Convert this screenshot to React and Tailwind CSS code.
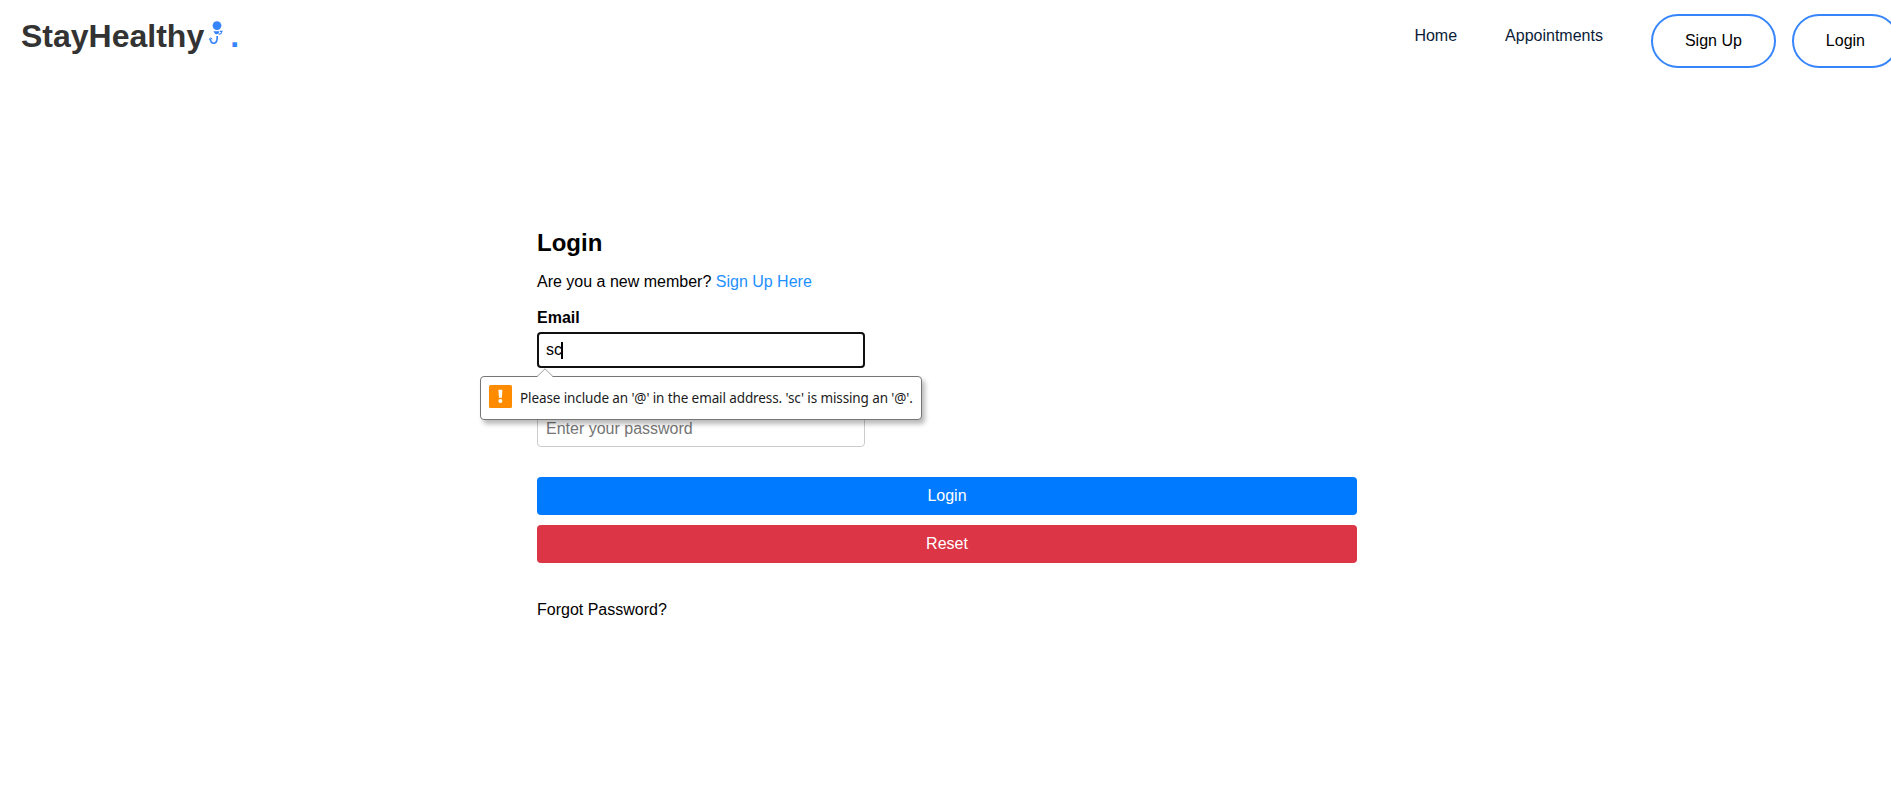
function DoctorIcon() {
  return (
    <svg className="ml-1 mt-[17px] h-7 w-5 shrink-0" viewBox="0 0 20 28" fill="none" aria-hidden="true">
      <circle cx="9" cy="7.6" r="4.4" fill="#3685fb" />
      <path d="M5.4 13.2H11.6L10.6 15.6Q8.6 17 6.8 15.4Z" fill="#3685fb" />
      <path d="M12 13.4H14L12.9 15.6L10.8 16.6" stroke="#3685fb" strokeWidth="1.1" />
      <path d="M2.2 20.8C2.8 24.2 4.6 25.5 6.3 25.2C9 24.6 9.4 22 9.2 18" stroke="#3685fb" strokeWidth="1.7" />
      <path d="M1.3 21.6L2.4 19.8L4.4 21" stroke="#3685fb" strokeWidth="1" />
    </svg>
  );
}

function NavButton({ children }) {
  return (
    <button className="h-[54px] shrink-0 rounded-full border-2 border-[#3685fb] px-8 text-base leading-[50px] text-black">
      {children}
    </button>
  );
}

function ValidationBubble() {
  return (
    <div className="absolute -left-[57px] top-[44px] z-10 flex h-11 w-[442px] items-center rounded-[4px] border border-[#767676] bg-white pl-2 shadow-[3px_4px_5px_rgba(0,0,0,0.28)]">
      <svg className="absolute -top-[9px] left-[55px] h-[10px] w-[18px]" viewBox="0 0 18 10" aria-hidden="true">
        <path d="M1 9L9 1L17 9V10H1Z" fill="#fff" />
        <path d="M1 8.6L9 0.8L17 8.6" fill="none" stroke="#9a9a9a" />
      </svg>
      <svg className="mb-[3px] h-[23px] w-[23px] shrink-0" viewBox="0 0 23 23" aria-hidden="true">
        <rect width="23" height="23" rx="1.5" fill="#ff8c00" />
        <path d="M9.4 4.8H13.4L12.9 12.8H9.9Z" fill="#fff" />
        <circle cx="11.4" cy="16" r="2" fill="#fff" />
      </svg>
      <span className="ml-2 whitespace-nowrap font-['Noto_Sans',sans-serif] text-[13.5px] leading-5 tracking-[-0.11px] text-[#1b1b1b]">
        Please include an '@' in the email address. 'sc' is missing an '@'.
      </span>
    </div>
  );
}

export default function App() {
  return (
    <div className="h-[807px] overflow-hidden bg-white font-['Liberation_Sans',Arial,sans-serif] text-base text-black">
      <nav className="flex h-[70px] items-start pl-[21px]">
        <a className="mt-px flex text-[32px] font-bold leading-[70px] text-[#333]">
          StayHealthy
          <DoctorIcon />
          <span className="ml-[2px] text-[#3685fb]">.</span>
        </a>
        <div className="ml-auto -mr-2 flex shrink-0 items-start">
          <a className="mt-[27px] leading-[18px] text-[#0b1c39]">Home</a>
          <a className="ml-12 mt-[27px] leading-[18px] text-[#0b1c39]">Appointments</a>
          <div className="ml-12 mt-[14px] flex gap-4">
            <NavButton>Sign Up</NavButton>
            <NavButton>Login</NavButton>
          </div>
        </div>
      </nav>

      <main className="ml-[537px] w-[820px] pt-[159px]">
        <h2 className="text-2xl font-bold leading-7">Login</h2>
        <p className="mt-4 leading-[18px]">
          Are you a new member? <a className="text-[#1e90ff]">Sign Up Here</a>
        </p>
        <div className="mt-[18px]">
          <label className="block font-bold leading-[18px]">Email</label>
          <div className="relative mt-[5px] flex h-9 w-[328px] items-center rounded-[4px] border-2 border-[#101010] pl-[7px]">
            <span className="leading-[18px]">sc</span>
            <span className="-ml-px h-[17px] w-[2px] bg-black" />
            <div className="absolute -left-[2px] -top-[2px]">
              <ValidationBubble />
            </div>
          </div>
        </div>
        <div className="mt-[43px] flex h-9 w-[328px] items-center rounded-[4px] border border-[#ccc] pl-2 leading-[18px] text-[#757575]">
          Enter your password
        </div>
        <div className="mt-[30px] flex flex-col gap-[10px] text-white">
          <button className="h-[38px] rounded-[4px] bg-[#007bff] leading-[18px]">Login</button>
          <button className="h-[38px] rounded-[4px] bg-[#dc3545] leading-[18px]">Reset</button>
        </div>
        <p className="mt-[38px] leading-[18px]">Forgot Password?</p>
      </main>
    </div>
  );
}
